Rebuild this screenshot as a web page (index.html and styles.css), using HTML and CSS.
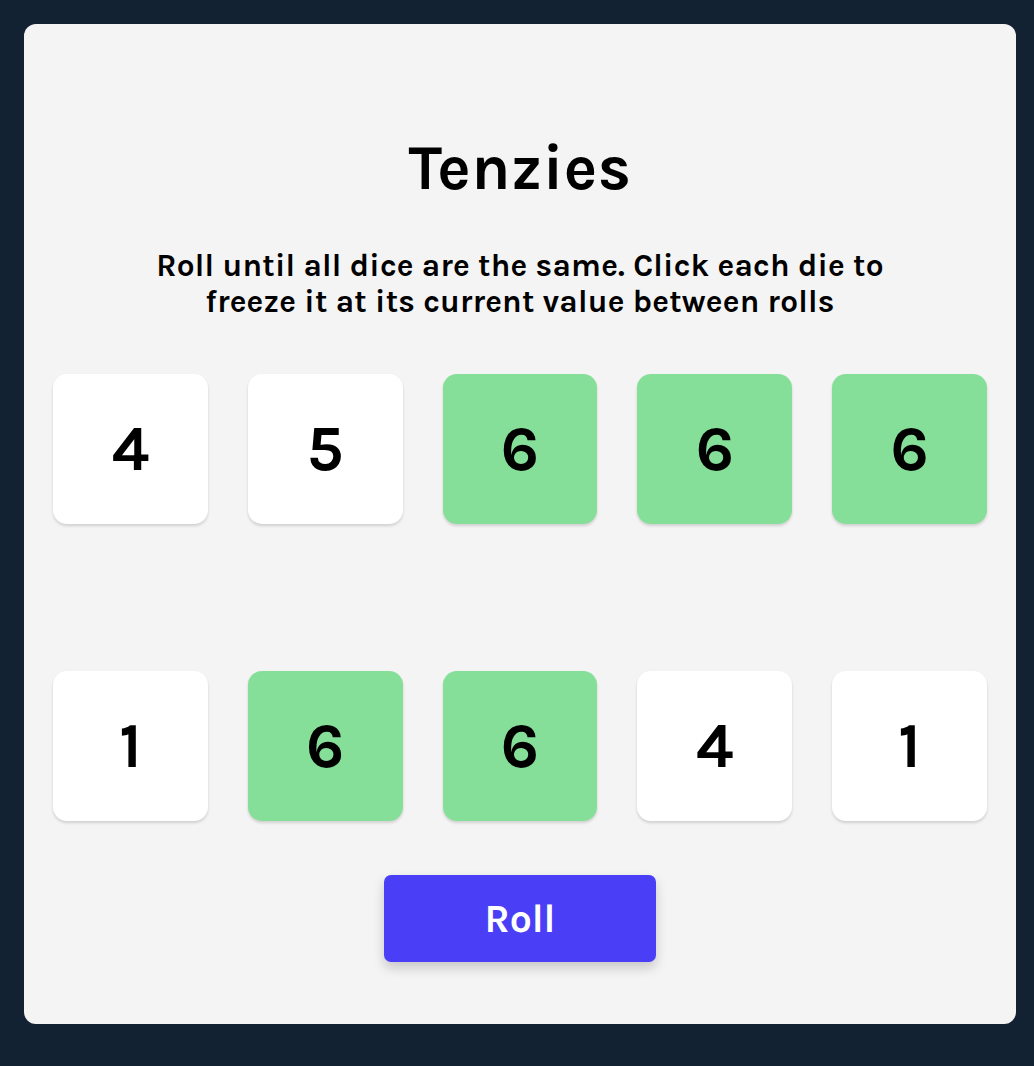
FILE: index.html
```html
<!DOCTYPE html>
<html>
<head>
<meta charset="utf-8">
<link rel="stylesheet" href="styles.css">
</head>
<body>
<main class="board">
  <h1 class="title">Tenzies</h1>
  <p class="instructions">Roll until all dice are the same. Click each die to freeze it at its current value between rolls</p>
  <div class="dice">
    <button class="die">4</button>
    <button class="die">5</button>
    <button class="die held">6</button>
    <button class="die held">6</button>
    <button class="die held">6</button>
    <button class="die">1</button>
    <button class="die held">6</button>
    <button class="die held">6</button>
    <button class="die">4</button>
    <button class="die">1</button>
  </div>
  <button class="roll">Roll</button>
</main>
</body>
</html>
```
FILE: styles.css
```css
* { box-sizing: border-box; }
html, body { margin: 0; }
body {
  background: #132233;
  padding: 24px 18px 42px 24px;
  font-family: "Karla", Roboto, "Liberation Sans", sans-serif;
}
.board {
  width: 992px;
  height: 1000px;
  background: #f4f4f4;
  border-radius: 12px;
  display: flex;
  flex-direction: column;
  align-items: center;
  padding: 0 29px;
}
.title {
  margin: 110px 0 0;
  font-size: 63px;
  line-height: 68px;
  font-weight: 700;
  color: #000;
  letter-spacing: 0.5px;
}
.instructions {
  margin: 46px 0 0;
  font-size: 31.5px;
  line-height: 36px;
  font-weight: 700;
  text-align: center;
  color: #000;
  max-width: 800px;
  letter-spacing: 0.2px;
}
.dice {
  margin-top: 54px;
  width: 100%;
  display: grid;
  grid-template-columns: repeat(5, 1fr);
  grid-template-rows: 150px 150px;
  column-gap: 40px;
  row-gap: 147px;
}
.die {
  border: none;
  background: #ffffff;
  border-radius: 14px;
  box-shadow: 0 2px 3px rgba(0, 0, 0, 0.15);
  font-family: inherit;
  font-size: 63px;
  font-weight: 700;
  color: #000;
  padding: 0;
}
.die.held {
  background: #86df98;
}
.roll {
  margin-top: 54px;
  width: 272px;
  height: 87px;
  border: none;
  border-radius: 7px;
  background: #4a3ff7;
  color: #fff;
  font-family: inherit;
  font-size: 39px;
  font-weight: 700;
  box-shadow: 0 6px 12px rgba(0, 0, 0, 0.18);
}
```
